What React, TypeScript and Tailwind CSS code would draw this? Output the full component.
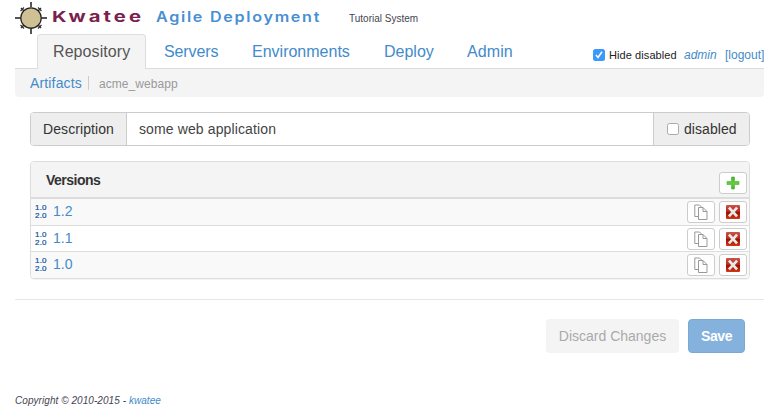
import React from "react";

const versions = ["1.2", "1.1", "1.0"];

function Logo() {
  return (
    <svg width="32" height="34" viewBox="0 0 32 34" className="block shrink-0">
      <g stroke="#333" strokeWidth="2">
        <path d="M16 2v5M16 28v6M0 18h6M26 18h6" stroke="#555" />
        <path d="M6 8l4 4M26 8l-4 4M6 28l4-4M26 28l-4-4" strokeWidth="1.5" />
        <path d="M5.500 11l3.500-3.500M23 7.500l3.500 3.500M5.500 25l3.500 3.500M23 28.500l3.500-3.500" strokeWidth="1.2" />
      </g>
      <circle cx="16" cy="18" r="10.2" fill="#cfc193" stroke="#222" strokeWidth="1.2" />
    </svg>
  );
}

function Plus() {
  return (
    <svg width="14" height="14" viewBox="0 0 14 14">
      <defs>
        <linearGradient id="plus" x2="0" y2="1">
          <stop stopColor="#4aa83a" />
          <stop offset=".5" stopColor="#65cf35" />
          <stop offset="1" stopColor="#50ae37" />
        </linearGradient>
      </defs>
      <path d="M5.500 1h3v4.500H13v3H8.500V13h-3V8.500H1v-3h4.500z" fill="url(#plus)" stroke="#55b747" strokeWidth=".7" />
    </svg>
  );
}

function Copy() {
  return (
    <svg width="14" height="16" viewBox="0 0 14 16" fill="#fff" stroke="#999" strokeWidth="1" strokeLinejoin="round">
      <path d="M.8 1h4.700l3 3v8.500H.8z" />
      <path d="M4.500 3.500h4.500l4 4v8H4.500z" />
      <path d="M9 3.500v4h4" fill="none" />
    </svg>
  );
}

function Cross() {
  return (
    <svg width="14" height="14" viewBox="0 0 14 14">
      <defs>
        <linearGradient id="cross" x2="0" y2="1">
          <stop stopColor="#c95547" />
          <stop offset=".5" stopColor="#b5261b" />
          <stop offset=".52" stopColor="#990e00" />
          <stop offset="1" stopColor="#d53613" />
        </linearGradient>
      </defs>
      <rect width="14" height="14" rx="1" fill="url(#cross)" />
      <path d="M3.800 3.500l6.400 7M10.200 3.500l-6.400 7" stroke="#e8e8e8" strokeWidth="2.600" strokeLinecap="square" />
    </svg>
  );
}

function IconButton({ children, label }: { children: React.ReactNode; label: string }) {
  return (
    <button aria-label={label} className="flex h-[22px] w-7 items-center justify-center rounded-[3px] border border-[#ccc] bg-white">
      {children}
    </button>
  );
}

export default function App() {
  return (
    <div className="h-[406px] w-[764px] overflow-hidden bg-white pl-[15px] font-['Liberation_Sans',Arial,sans-serif] text-sm text-[#333]">
      <header className="flex h-[34px] items-start whitespace-nowrap">
        <Logo />
        <div className="ml-[5px] mt-[7px] w-[104px] shrink-0"><span className="inline-block origin-left scale-x-[1.35] text-[15px] leading-5 font-bold tracking-[2.3px] text-[#7b1f50] font-['Inter',sans-serif]">Kwatee</span></div>
        <div className="mt-[7px] w-[193px] shrink-0"><span className="inline-block origin-left scale-x-[1.150] text-[14px] leading-5 font-semibold tracking-[1.500px] text-[#488fd2] font-['Inter',sans-serif]">Agile Deployment</span></div>
        <div className="mt-[11px] text-[10px] leading-4 text-[#45454f]">Tutorial System</div>
      </header>
      <nav className="flex h-[35px] border-b border-[#ddd] text-base leading-9 text-[#428bca]">
        <a className="ml-[22px] h-[35px] w-[109px] shrink-0 rounded-t border border-b-0 border-[#ddd] bg-[#f4f4f4] pl-[15px] leading-[34px] tracking-[0.08px] text-[#555]">Repository</a>
        <a className="ml-[18px] w-[88px] shrink-0 tracking-[-0.1px]">Servers</a>
        <a className="w-[132px] shrink-0">Environments</a>
        <a className="w-[83px] shrink-0">Deploy</a>
        <a className="w-[126px] shrink-0 tracking-[0.1px]">Admin</a>
        <div className="flex shrink-0 items-center whitespace-nowrap pt-[7px] text-[11px] leading-4">
          <span className="mr-1 flex size-3 items-center justify-center rounded-[2.500px] bg-[#3b99fc]">
            <svg width="8" height="8" viewBox="0 0 8 8" fill="none" stroke="#fff" strokeWidth="1.500"><path d="M1 4l2 2.500L7 .8" /></svg>
          </span>
          <span className="w-[75px] tracking-[0.08px] text-[#222]">Hide disabled</span>
          <i className="w-[41px] text-xs">admin</i>
          <span className="text-xs">[logout]</span>
        </div>
      </nav>
      <div className="flex h-7 items-center rounded-b bg-[#f4f4f4] pl-[15px]">
        <a className="w-[58px] tracking-[0.15px] text-[#428bca]">Artifacts</a>
        <span className="h-[14px] w-px bg-[#ccc]" />
        <span className="ml-[10px] pt-px text-xs tracking-[0.05px] text-[#999]">acme_webapp</span>
      </div>
      <main className="ml-[15px] mt-[15px] w-[720px]">
        <div className="flex h-[34px] overflow-hidden rounded border border-[#ccc] leading-8">
          <div className="w-24 border-r border-[#ccc] bg-[#eee] pl-3 tracking-[0.08px]">Description</div>
          <div className="grow pl-3 tracking-[0.12px] text-[#444]">some web application</div>
          <div className="flex w-24 items-center border-l border-[#ccc] bg-[#eee] pl-[13px] tracking-[0.05px]">
            <span className="mr-[5px] size-3 rounded-[2.500px] border border-[#aaa] bg-white" />disabled
          </div>
        </div>
        <section className="mt-[15px] h-[118px] overflow-hidden rounded border border-[#ddd] shadow-[0_1px_1px_rgba(0,0,0,0.05)]">
          <div className="flex h-[37px] items-start justify-between border-b-2 border-[#ddd] bg-[#f4f4f4] pl-[15px] pr-0.5">
            <span className="mt-2 leading-5 font-bold tracking-[-0.5px]">Versions</span>
            <div className="mt-[10px]"><IconButton label="Add version"><Plus /></IconButton></div>
          </div>
          {versions.map((v) => (
            <div key={v} className="flex h-[26.600px] items-start border-b border-[#ddd] pl-1 pr-0.5 pt-0.5 last:border-b-0 odd:bg-white even:bg-[#f9f9f9]">
              <span className="mt-[3px] w-[18px] text-[8px] leading-2 tracking-[0.2px] text-[#0b4f9c] [-webkit-text-stroke:0.2px_#0b4f9c]">1.0<br />2.0</span>
              <a className="grow leading-5 text-[#428bca]">{v}</a>
              <div className="flex gap-1">
                <IconButton label={"Copy " + v}><Copy /></IconButton>
                <IconButton label={"Delete " + v}><Cross /></IconButton>
              </div>
            </div>
          ))}
        </section>
      </main>
      <div className="mt-5 border-t border-[#e7e7e7]" />
      <div className="mt-[19px] flex justify-end gap-[9px] pr-[19px]">
        <button className="h-[34px] w-[133px] rounded bg-[#f4f4f4] text-[#aaa]">Discard Changes</button>
        <button className="h-[34px] w-[57px] rounded border border-[#78aad8] bg-[#84b2dd] font-bold tracking-[-0.4px] text-white">Save</button>
      </div>
      <footer className="mt-[42px] text-[10px] leading-3 tracking-[0.060px] italic text-[#45454f]">Copyright © 2010-2015 - <a className="text-[#428bca]">kwatee</a></footer>
    </div>
  );
}
